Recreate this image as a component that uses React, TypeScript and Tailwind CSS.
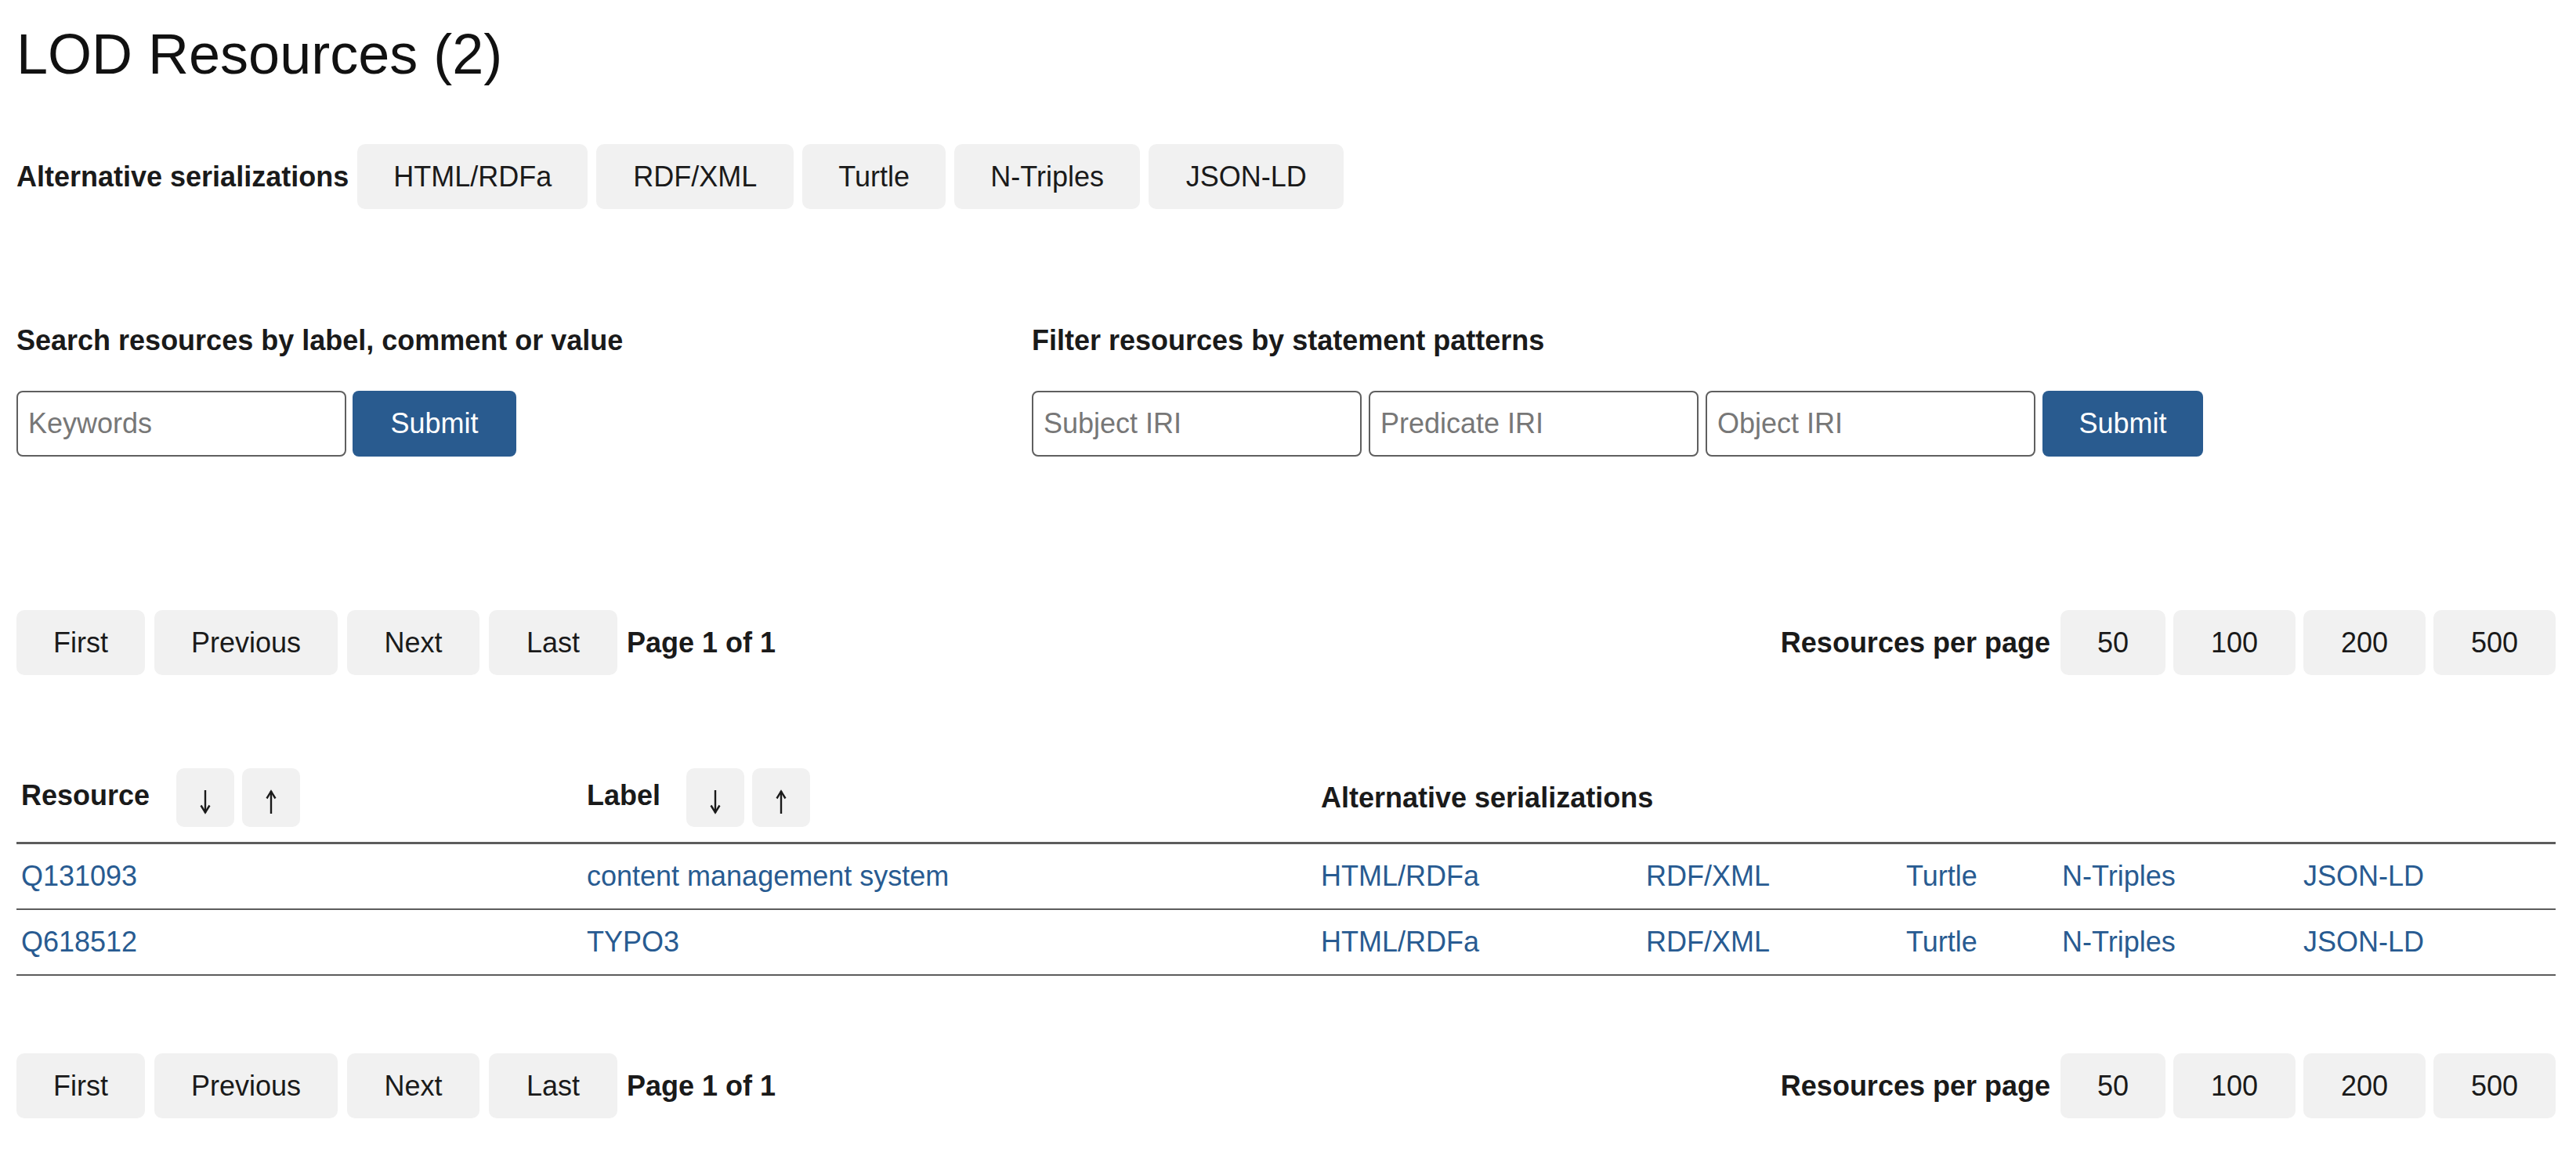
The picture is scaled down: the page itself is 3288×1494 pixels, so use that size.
import React from "react";

const font = { fontFamily: '"Liberation Sans", Arial, Helvetica, sans-serif' };

function GrayBtn({ children, w }: { children: React.ReactNode; w: string }) {
  return (
    <button className={"h-[83px] rounded-[10px] bg-[#f1f1f1] text-[36px] leading-none text-[#1a1a1a] flex items-center justify-center whitespace-nowrap shrink-0 " + w}>
      {children}
    </button>
  );
}

function Arrow({ up }: { up?: boolean }) {
  return (
    <svg width="16" height="32" viewBox="0 0 16 32">
      {up ? (
        <g stroke="#1a1a1a" fill="none" strokeWidth="2.4">
          <line x1="8" y1="2" x2="8" y2="31" />
          <polyline points="2.5,11.5 8,2.5 13.5,11.5" strokeLinejoin="miter" strokeLinecap="butt" />
        </g>
      ) : (
        <g stroke="#1a1a1a" fill="none" strokeWidth="2.4">
          <line x1="8" y1="1" x2="8" y2="30" />
          <polyline points="2.5,20.5 8,29.5 13.5,20.5" strokeLinejoin="miter" strokeLinecap="butt" />
        </g>
      )}
    </svg>
  );
}

function SortBtn({ up }: { up?: boolean }) {
  return (
    <button className="w-[74px] h-[75px] rounded-[10px] bg-[#f1f1f1] flex items-center justify-center pt-[10px]">
      <Arrow up={up} />
    </button>
  );
}

function Pagination() {
  return (
    <div className="flex items-center justify-between h-[83px]">
      <div className="flex items-center gap-[12px]">
        <GrayBtn w="w-[164px]">First</GrayBtn>
        <GrayBtn w="w-[234px]">Previous</GrayBtn>
        <GrayBtn w="w-[169px]">Next</GrayBtn>
        <GrayBtn w="w-[164px]">Last</GrayBtn>
        <span className="text-[36px] font-bold text-[#1a1a1a] whitespace-nowrap">Page 1 of 1</span>
      </div>
      <div className="flex items-center gap-[10px]">
        <span className="mr-[3px] text-[36px] font-bold text-[#1a1a1a] whitespace-nowrap">Resources per page</span>
        <GrayBtn w="w-[134px]">50</GrayBtn>
        <GrayBtn w="w-[156px]">100</GrayBtn>
        <GrayBtn w="w-[156px]">200</GrayBtn>
        <GrayBtn w="w-[156px]">500</GrayBtn>
      </div>
    </div>
  );
}

const inputCls =
  "h-[84px] w-[421px] border-2 border-[#5f5f5f] rounded-[8px] px-[13px] text-[36px] text-[#1a1a1a] placeholder:text-[#777777] bg-white outline-none";
const submitCls =
  "h-[84px] rounded-[8px] bg-[#295b8f] text-white text-[36px] leading-none flex items-center justify-center";

const serials = ["HTML/RDFa", "RDF/XML", "Turtle", "N-Triples", "JSON-LD"];
const serialWidths = ["w-[294px]", "w-[252px]", "w-[183px]", "w-[237px]", "w-[249px]"];

const rows = [
  { id: "Q131093", label: "content management system" },
  { id: "Q618512", label: "TYPO3" },
];

export default function App() {
  return (
    <div className="bg-white min-h-[1494px] pl-[21px] pr-[26px] pt-[33px] text-[#1a1a1a]" style={font}>
      <h1 className="text-[72px] leading-none h-[72px] font-normal text-[#111111] whitespace-nowrap">LOD Resources (2)</h1>

      <div className="mt-[79px] flex items-center gap-[11px] h-[83px]">
        <span className="text-[36px] font-bold whitespace-nowrap">Alternative serializations</span>
        {serials.map((s, i) => (
          <GrayBtn key={s} w={serialWidths[i]}>{s}</GrayBtn>
        ))}
      </div>

      <div className="mt-[150px] grid grid-cols-[1296px_1fr]">
        <div>
          <h2 className="text-[36px] font-bold leading-none h-[36px] whitespace-nowrap">Search resources by label, comment or value</h2>
          <div className="mt-[46px] flex items-center gap-[8px]">
            <input className={inputCls} placeholder="Keywords" />
            <button className={submitCls + " w-[209px]"}>Submit</button>
          </div>
        </div>
        <div>
          <h2 className="text-[36px] font-bold leading-none h-[36px] whitespace-nowrap">Filter resources by statement patterns</h2>
          <div className="mt-[46px] flex items-center gap-[9px]">
            <input className={inputCls} placeholder="Subject IRI" />
            <input className={inputCls} placeholder="Predicate IRI" />
            <input className={inputCls} placeholder="Object IRI" />
            <button className={submitCls + " w-[205px]"}>Submit</button>
          </div>
        </div>
      </div>

      <div className="mt-[196px]">
        <Pagination />
      </div>

      <div className="mt-[119px] grid grid-cols-[722px_937px_415px_332px_199px_308px_1fr] text-[36px]">
        <div className="px-[6px] pb-[19px] border-b-[3px] border-[#5c5c5c] flex items-center">
          <span className="font-bold mb-[6px]">Resource</span>
          <div className="ml-[34px] flex gap-[10px]">
            <SortBtn />
            <SortBtn up />
          </div>
        </div>
        <div className="px-[6px] pb-[19px] border-b-[3px] border-[#5c5c5c] flex items-center">
          <span className="font-bold mb-[6px]">Label</span>
          <div className="ml-[33px] flex gap-[10px]">
            <SortBtn />
            <SortBtn up />
          </div>
        </div>
        <div className="col-span-5 px-[6px] pb-[19px] border-b-[3px] border-[#5c5c5c] flex items-center">
          <span className="font-bold">Alternative serializations</span>
        </div>

        {rows.map((r) => (
          <React.Fragment key={r.id}>
            <div className="h-[84px] px-[6px] border-b-2 border-[#5c5c5c] flex items-center">
              <a href="#" className="text-[#285b91]">{r.id}</a>
            </div>
            <div className="h-[84px] px-[6px] border-b-2 border-[#5c5c5c] flex items-center">
              <a href="#" className="text-[#285b91] whitespace-nowrap">{r.label}</a>
            </div>
            {serials.map((s) => (
              <div key={s} className="h-[84px] px-[6px] border-b-2 border-[#5c5c5c] flex items-center">
                <a href="#" className="text-[#285b91] whitespace-nowrap">{s}</a>
              </div>
            ))}
          </React.Fragment>
        ))}
      </div>

      <div className="mt-[99px]">
        <Pagination />
      </div>
    </div>
  );
}
